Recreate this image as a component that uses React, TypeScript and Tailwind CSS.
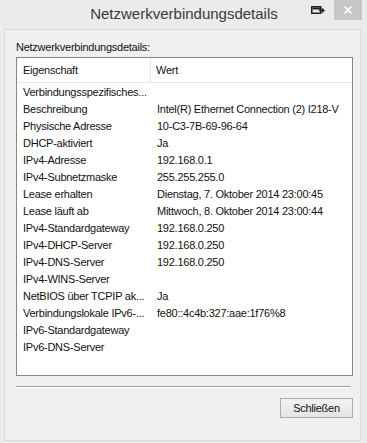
import React from "react";

const rows: [string, string][] = [
  ["Verbindungsspezifisches...", ""],
  ["Beschreibung", "Intel(R) Ethernet Connection (2) I218-V"],
  ["Physische Adresse", "10-C3-7B-69-96-64"],
  ["DHCP-aktiviert", "Ja"],
  ["IPv4-Adresse", "192.168.0.1"],
  ["IPv4-Subnetzmaske", "255.255.255.0"],
  ["Lease erhalten", "Dienstag, 7. Oktober 2014 23:00:45"],
  ["Lease läuft ab", "Mittwoch, 8. Oktober 2014 23:00:44"],
  ["IPv4-Standardgateway", "192.168.0.250"],
  ["IPv4-DHCP-Server", "192.168.0.250"],
  ["IPv4-DNS-Server", "192.168.0.250"],
  ["IPv4-WINS-Server", ""],
  ["NetBIOS über TCPIP ak...", "Ja"],
  ["Verbindungslokale IPv6-...", "fe80::4c4b:327:aae:1f76%8"],
  ["IPv6-Standardgateway", ""],
  ["IPv6-DNS-Server", ""],
];

export default function App() {
  return (
    <div className="w-[367px] h-[443px] bg-[#ebebeb] flex flex-col text-[11px] tracking-[-0.25px] text-[#111] font-['Liberation_Sans',Arial,sans-serif]">
      {/* title bar */}
      <div className="relative h-[29px] shrink-0 flex items-center justify-center">
        <span className="text-[15px] tracking-normal text-[#3a3a3a] pl-[1px]">Netzwerkverbindungsdetails</span>
        <svg className="absolute left-[311px] top-[6px]" width="14" height="8" viewBox="0 0 14 8">
          <rect x="0.75" y="0.75" width="9" height="6.5" fill="none" stroke="#222" strokeWidth="1.5" />
          <rect x="1.5" y="1.5" width="7.5" height="2" fill="#222" />
          <path d="M8 4.5h5M11 2.5l2 2-2 2" fill="none" stroke="#222" strokeWidth="1.3" />
        </svg>
        <div className="absolute left-[334px] top-0 w-[28px] h-[20px] bg-[#c7c7c7] flex items-center justify-center">
          <svg width="10" height="10" viewBox="0 0 10 10">
            <path d="M1.5 1.5l7 7M8.5 1.5l-7 7" stroke="#fff" strokeWidth="1.6" />
          </svg>
        </div>
      </div>

      {/* client area */}
      <div className="ml-[4px] mr-[6px] mb-[2px] flex-1 border border-[#dadada] bg-[#f0f0f0] flex flex-col pl-[11px] pr-[7px]">
        <div className="h-[27px] pt-[10px] leading-[14px]">Netzwerkverbindungsdetails:</div>
        <div className="h-[319px] border border-[#828790] bg-white flex flex-col">
          <div className="h-[25px] flex border-b border-[#e5e5e5] leading-[24px]">
            <div className="w-[134px] pl-[6px] border-r border-[#e5e5e5]">Eigenschaft</div>
            <div className="pl-[5px]">Wert</div>
          </div>
          <div className="pt-[1px]">
            {rows.map(([k, v]) => (
              <div key={k} className="h-[17px] leading-[17px] flex">
                <div className="w-[134px] shrink-0 pl-[6px] whitespace-nowrap overflow-hidden">{k}</div>
                <div className="pl-[6px] whitespace-nowrap">{v}</div>
              </div>
            ))}
          </div>
        </div>
        <div className="mt-[10px] h-[2px] border-t border-[#a0a0a0] border-b border-b-white mr-[2px]" />
        <div className="flex justify-end mt-[10px]">
          <button className="w-[73px] h-[20px] border border-[#acacac] bg-gradient-to-b from-[#f2f2f2] to-[#e5e5e5] text-[11px] text-[#111] leading-[18px]">
            Schließen
          </button>
        </div>
      </div>
    </div>
  );
}
